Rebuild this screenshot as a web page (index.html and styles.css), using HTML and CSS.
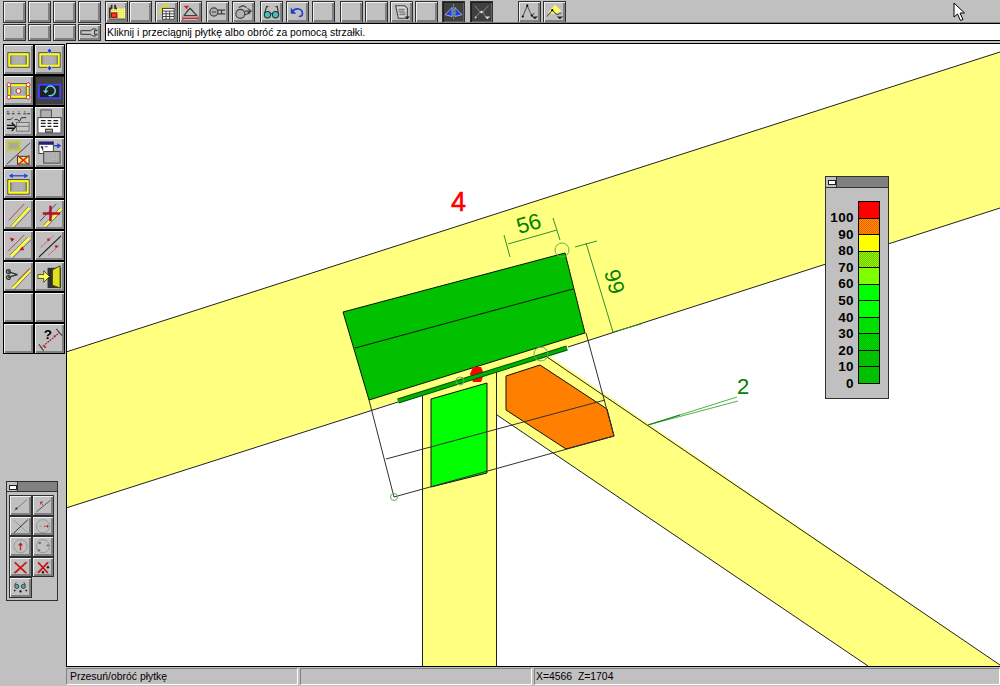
FILE: index.html
```html
<!DOCTYPE html>
<html lang="pl">
<head>
<meta charset="utf-8">
<title>Płytka</title>
<link rel="stylesheet" href="styles.css">
</head>
<body>
<svg class="defs" width="0" height="0">
  <defs>
    <pattern id="dy" width="2" height="2" patternUnits="userSpaceOnUse"><rect width="2" height="2" fill="#ffff80"/><rect width="1" height="1" fill="#c8c840"/></pattern>
    <pattern id="dg" width="2" height="2" patternUnits="userSpaceOnUse"><rect width="2" height="2" fill="#c0c0c0"/><rect width="1" height="1" fill="#808080"/></pattern>
    <symbol id="frame" viewBox="0 0 28 28"><rect x="3" y="7" width="22" height="15" fill="#a8a8a8" stroke="#404040"/><rect x="4.500" y="8.500" width="19" height="12" fill="none" stroke="#ffff00" stroke-width="2"/><rect x="9" y="10" width="10" height="9" fill="url(#dg)"/><path d="M6 10v9M22 10v9" stroke="#606060"/></symbol>
  </defs>
</svg>

<header class="toolbar">
  <div class="row row-top">
    <div class="group g-a"><span class="btn"></span><span class="btn"></span><span class="btn"></span><span class="btn"></span></div>
    <div class="group g-b">
      <span class="btn"><svg class="ico" viewBox="0 0 21 20"><rect x="3" y="6" width="17" height="11" fill="url(#dy)"/><path d="M3 17V6h2V2M9 2v4h2" fill="none" stroke="#303030" stroke-width="2"/><rect x="5" y="11" width="6" height="5" fill="#ff3030" stroke="#800000"/><path d="M2 18h18" stroke="#303030"/></svg></span>
      <span class="btn"></span>
    </div>
    <div class="group g-b">
      <span class="btn"><svg class="ico" viewBox="0 0 21 20"><path d="M2 8L8 1h6L2 13z" fill="#d8d840"/><rect x="6" y="6" width="13" height="12" fill="#fff" stroke="#303030"/><path d="M6 9h13M10 9v9M14 9v9M6 12h13M6 15h13" stroke="#303030"/></svg></span>
      <span class="btn"><svg class="ico" viewBox="0 0 21 20"><path d="M3 14c2-1 3-5 7-8 4 3 5 7 8 8z" fill="#c0c0c0" stroke="#404040" stroke-width="1.500"/><path d="M2 17h17" stroke="#e02020" stroke-width="1.500"/><path d="M3 3h6l-3 4z" fill="#e02020"/><path d="M2 15v4M19 15v4" stroke="#e02020"/></svg></span>
    </div>
    <div class="group g-d">
      <span class="btn"><svg class="ico" viewBox="0 0 21 20"><circle cx="6.500" cy="10" r="4.500" fill="#b0b0b0" stroke="#404040" stroke-width="1.300"/><path d="M4 10h5M11 8h8M11 12h8M15 8v4" stroke="#404040" stroke-width="1.300" fill="none"/></svg></span>
      <span class="btn"><svg class="ico" viewBox="0 0 21 20"><circle cx="7" cy="12" r="5" fill="#b0b0b0" stroke="#404040" stroke-width="1.300"/><path d="M5 5l5-2 4 2M12 9h7M12 13l6-2M15 6l4 3-4 2" stroke="#404040" stroke-width="1.300" fill="none"/></svg></span>
    </div>
    <div class="group g-e">
      <span class="btn"><svg class="ico" viewBox="0 0 21 20"><circle cx="6" cy="13" r="3.500" fill="#40c0c0" stroke="#303030" stroke-width="1.200"/><circle cx="15" cy="13" r="3.500" fill="#40c0c0" stroke="#303030" stroke-width="1.200"/><path d="M9 12h3M3 11l2-7h2M18 11l-1-7h-2" fill="none" stroke="#303030" stroke-width="1.200"/></svg></span>
      <span class="btn"><svg class="ico" viewBox="0 0 21 20"><path d="M5 9c4-4 11-3 11 3 0 2-2 3-4 3" fill="none" stroke="#2040c0" stroke-width="1.800"/><path d="M3 5v7h6z" fill="#2040c0"/></svg></span>
      <span class="btn"></span>
    </div>
    <div class="group g-f">
      <span class="btn"></span><span class="btn"></span>
      <span class="btn"><svg class="ico" viewBox="0 0 21 20"><path d="M4 3h10l3 3v11H7z" fill="#d8d8d8" stroke="#404040" stroke-width="1.200"/><path d="M7 7h7M7 9h7M8 11h7M8 13h7" stroke="#606060"/><path d="M14 15h6l-3 3z" fill="#202020"/></svg></span>
      <span class="btn"></span>
    </div>
    <div class="group g-g">
      <span class="btn on"><svg class="ico" viewBox="0 0 21 20"><path d="M9 5v10L1 13z" fill="#2040e0" stroke="#fff" stroke-width=".6"/><path d="M12 5v10l8-2z" fill="#2040e0" stroke="#fff" stroke-width=".6"/><path d="M10.500 1v18" stroke="#40c0b0" stroke-dasharray="2 1"/></svg></span>
      <span class="btn on"><svg class="ico" viewBox="0 0 21 20"><path d="M3 3l6 7-6 7M18 3l-6 7 3 5" fill="none" stroke="#909090"/><circle cx="10.500" cy="10" r="1.500" fill="#e0e0e0"/><circle cx="4" cy="16" r="1" fill="#e0e0e0"/><path d="M14 15h6l-3 3z" fill="#e0e0e0"/></svg></span>
    </div>
    <div class="group g-h">
      <span class="btn"><svg class="ico" viewBox="0 0 21 20"><path d="M3 15L8 3l5 11 3-3" fill="none" stroke="#606060" stroke-width="1.200"/><circle cx="3" cy="15" r="1.200"/><circle cx="8" cy="3" r="1.200"/><circle cx="13" cy="14" r="1.200"/><path d="M13 15h7l-3.500 3z" fill="#202020"/></svg></span>
      <span class="btn"><svg class="ico" viewBox="0 0 21 20"><path d="M3 11L11 2l7 7-6 3z" fill="#ffff60"/><path d="M2 15l6-7 5 5 5-2" fill="none" stroke="#505050" stroke-width="1.200"/><circle cx="8" cy="8" r="1.200"/><path d="M13 15h7l-3.500 3z" fill="#202020"/></svg></span>
    </div>
  </div>
  <div class="row row-bottom">
    <div class="group g-a short">
      <span class="btn"></span><span class="btn"></span><span class="btn"></span>
      <span class="btn"><svg class="ico" viewBox="0 0 21 14"><path d="M1 5h11a4 4 0 0 1 7 0h-3v4h3a4 4 0 0 1-7 0H1z" fill="#c8c8c8" stroke="#303030" stroke-width="1.100"/></svg></span>
    </div>
    <p class="hint">Kliknij i przeciągnij płytkę albo obróć za pomocą strzałki.</p>
  </div>
</header>

<main class="main">
  <nav class="side">
    <span class="tool"><svg class="ico" viewBox="0 0 28 28"><use href="#frame"/></svg></span>
    <span class="tool"><svg class="ico" viewBox="0 0 28 28"><use href="#frame"/><path d="M14 2l2.500 3L14 8l-2.500-3zM14 20l2.500 3-2.500 3-2.500-3z" fill="#2040e0" stroke="#fff" stroke-width=".5"/></svg></span>
    <span class="tool"><svg class="ico" viewBox="0 0 28 28"><use href="#frame"/><g fill="#fff" stroke="#d02020"><circle cx="4" cy="8" r="2"/><circle cx="24" cy="8" r="2"/><circle cx="4" cy="21" r="2"/><circle cx="24" cy="21" r="2"/><circle cx="14" cy="14.500" r="2.500"/></g></svg></span>
    <span class="tool on"><svg class="ico" viewBox="0 0 28 28"><rect x="3" y="8" width="22" height="14" fill="#202020" stroke="#4040ff" stroke-width="2"/><path d="M10 15a5 5 0 1 1 3 4" fill="none" stroke="#60d8d8" stroke-width="1.500"/><path d="M7 14h6l-3 3z" fill="#60d8d8"/></svg></span>
    <span class="tool"><svg class="ico" viewBox="0 0 28 28"><path d="M2 6h3M7 6h3M13 6h3M19 6h3M23 6h3M2 12h4l2-2M10 12h3l2 2 2-4h5M2 4h2M8 4h1M14 4h1M20 4h1" stroke="#303030" fill="none"/><rect x="12" y="15" width="13" height="9" fill="#c8c8c8" stroke="#707070"/><path d="M12 19h13" stroke="#707070"/><path d="M2 18h7M2 21h7M7 15l4 4.500L7 24" fill="none" stroke="#101010" stroke-width="1.300"/></svg></span>
    <span class="tool"><svg class="ico" viewBox="0 0 28 28"><rect x="5" y="2" width="11" height="9" fill="#b0b0b0" stroke="#505050"/><rect x="2" y="10" width="24" height="16" fill="#fff" stroke="#303030"/><path d="M5 13h5M12 13h4M18 13h5M5 16h5M12 16h4M18 16h5M5 19h5M12 19h4M18 19h5" stroke="#202020" stroke-width="1.300"/><rect x="10" y="22" width="7" height="3" fill="#c0c0c0" stroke="#202020"/></svg></span>
    <span class="tool"><svg class="ico" viewBox="0 0 28 28"><path d="M2 26L26 4" stroke="#404040"/><rect x="3" y="3" width="12" height="8" fill="#a8a8a8" stroke="#c8c820" stroke-width="2"/><rect x="13" y="18" width="12" height="8" fill="url(#dy)" stroke="#303030"/><path d="M13 17l12 10M25 17L13 27" stroke="#e02020" stroke-width="1.500"/></svg></span>
    <span class="tool"><svg class="ico" viewBox="0 0 28 28"><rect x="3" y="3" width="15" height="12" fill="#fff" stroke="#404040"/><rect x="3" y="3" width="15" height="3" fill="#202080"/><path d="M5 8h2v4M9 8h3" stroke="#404040"/><path d="M19 7h5M22 5l3 2-3 2" fill="none" stroke="#2040c0" stroke-width="1.300"/><rect x="8" y="13" width="17" height="12" fill="#b0b0b0" stroke="#404040"/><rect x="16" y="15" width="7" height="8" fill="url(#dg)"/></svg></span>
    <span class="tool"><svg class="ico" viewBox="0 0 28 28"><use href="#frame" y="3"/><path d="M6 6h16" stroke="#2040e0" stroke-width="1.300"/><path d="M4 6l4-2.500v5zM24 6l-4-2.500v5z" fill="#2040e0"/></svg></span>
    <span class="tool"></span>
    <span class="tool"><svg class="ico" viewBox="0 0 28 28"><path d="M4 20L20 3" stroke="#c04040"/><path d="M7 26L25 7" stroke="#ffff40" stroke-width="3"/><path d="M6 26L24 6M9 28L27 9" stroke="#505050" stroke-width=".7"/></svg></span>
    <span class="tool"><svg class="ico" viewBox="0 0 28 28"><path d="M4 21L21 3" stroke="#505050"/><path d="M9 26L26 8" stroke="#ffff40" stroke-width="3"/><path d="M8 25L25 7M10 28L27 10" stroke="#505050" stroke-width=".7"/><path d="M7 13h18M15 5v16" stroke="#b01030" stroke-width="2.500"/></svg></span>
    <span class="tool"><svg class="ico" viewBox="0 0 28 28"><path d="M3 20L20 3" stroke="#c04040"/><path d="M6 25L25 6" stroke="#ffff40" stroke-width="3"/><path d="M5 24L24 5M8 27L27 8" stroke="#505050" stroke-width=".7"/><path d="M5 6l5 1-3 3z" fill="#c01010"/><path d="M18 15l2 4h-5z" fill="#c01010"/></svg></span>
    <span class="tool"><svg class="ico" viewBox="0 0 28 28"><path d="M3 26L26 4" stroke="#202020" stroke-width="1.200"/><path d="M5 16L18 4M13 24L25 13" stroke="#c05050" stroke-dasharray="3 1"/><circle cx="13" cy="8" r="1.500" fill="#c03030"/><circle cx="21" cy="15" r="1.500" fill="#c03030"/></svg></span>
    <span class="tool"><svg class="ico" viewBox="0 0 28 28"><path d="M8 26L26 8" stroke="#ffff40" stroke-width="3"/><path d="M7 25L25 7M9 28L27 9" stroke="#505050" stroke-width=".7"/><path d="M13 18L26 5" stroke="#c05050"/><path d="M3 9l10 3M3 15l10-3" stroke="#303030" stroke-width="1.300"/><circle cx="3.500" cy="9" r="2" fill="none" stroke="#303030" stroke-width="1.300"/><circle cx="3.500" cy="15" r="2" fill="none" stroke="#303030" stroke-width="1.300"/></svg></span>
    <span class="tool"><svg class="ico" viewBox="0 0 28 28"><rect x="12" y="5" width="14" height="21" fill="#303030"/><path d="M17 7l8-4v23l-8-3z" fill="#e0e020" stroke="#404010"/><path d="M2 12h6V8l6 6-6 6v-4H2z" fill="#ffff60" stroke="#505010"/></svg></span>
    <span class="tool"></span>
    <span class="tool"></span>
    <span class="tool"></span>
    <span class="tool"><svg class="ico" viewBox="0 0 28 28"><path d="M5 24L24 8" stroke="#c01010" stroke-dasharray="2 1" stroke-width="1.200"/><path d="M3 20l5 7M21 4l6 7" stroke="#404040" stroke-width="1.200"/><path d="M8 21l1 3 2-1zM21 11l-3 0 1 2z" fill="#c01010"/><text class="qmark" x="8" y="14">?</text></svg></span>
  </nav>

  <section class="canvas">
    <svg class="drawing" viewBox="67 44 933 622" width="933" height="622">
      <path d="M66 352L1000 52V208L66 508z" fill="#ffff80"/>
      <path d="M422 396L497 370V666H422z" fill="#ffff80"/>
      <path d="M497 370L547 354L1000 665V666H868L497 415z" fill="#ffff80"/>
      <g fill="none" stroke="#202020">
        <path d="M66 352L1000 52"/>
        <path d="M66 508L398 402M568 347L1000 208"/>
        <path d="M422.500 396V666M496.500 372V666"/>
        <path d="M547 357L1000 665M497 415L868 666"/>
      </g>
      <path d="M343 312L565 253L585 333L369 400z" fill="#00c000" stroke="#101010"/>
      <path d="M355 348L573 289" stroke="#101010" fill="none"/>
      <path d="M431 399L487 383V473L431 487z" fill="#00ff00" stroke="#101010"/>
      <path d="M506 376L540 365L607 409L614 436L566 449L506 410z" fill="#ff8000" stroke="#101010"/>
      <g fill="none" stroke="#303030">
        <path d="M369 400L394 497L614 436L586 333"/>
        <path d="M386 459L605 400"/>
      </g>
      <path d="M473 367L481 367L484 374L481 382L473 382L470 374z" fill="#ff0000"/>
      <path d="M398 401L567 348" stroke="#005000" stroke-width="5" fill="none"/>
      <path d="M398 401L567 348" stroke="#00b000" stroke-width="3" fill="none"/>
      <g fill="none" stroke="#60b060">
        <circle cx="562" cy="250" r="7"/>
        <circle cx="541" cy="354" r="7"/>
        <circle cx="460" cy="381" r="4"/>
        <circle cx="394" cy="497" r="3.500"/>
      </g>
      <g fill="none" stroke="#309030">
        <path d="M508 244L557 230M504 235L510 257M553 218L560 240"/>
        <path d="M586 243L613 332L641 324M575 247L597 241"/>
      </g>
      <g fill="none" stroke="#50b050">
        <path d="M648 425L737 397M648 425L738 401"/>
      </g>
      <path d="M648 425L680 415" stroke="#108010"/>
      <text class="num" transform="translate(519 234) rotate(-16)">56</text>
      <text class="num" transform="translate(604 272) rotate(74)">99</text>
      <text class="num" x="737" y="394">2</text>
      <text class="mark" x="451" y="211">4</text>
    </svg>
  </section>
</main>

<footer class="status">
  <span class="field f-a">Przesuń/obróć płytkę</span>
  <span class="field f-b"></span>
  <span class="field f-c">X=4566&nbsp; Z=1704</span>
</footer>

<aside class="palette">
  <div class="titlebar"><i class="sys"></i></div>
  <div class="pal-grid">
    <span class="pbtn"><svg class="ico" viewBox="0 0 22 20"><path d="M3 17L19 3" stroke="#707070"/><circle cx="6" cy="14" r="1.300" fill="#202020"/></svg></span>
    <span class="pbtn"><svg class="ico" viewBox="0 0 22 20"><path d="M3 18L20 4" stroke="#404040"/><path d="M8 6l3 4M8 6l3 0M8 6v3" stroke="#d02020" fill="none"/></svg></span>
    <span class="pbtn"><svg class="ico" viewBox="0 0 22 20"><path d="M3 3l16 14" stroke="#909090"/><path d="M3 18L20 2" stroke="#303030" stroke-width="1.200"/></svg></span>
    <span class="pbtn"><svg class="ico" viewBox="0 0 22 20"><circle cx="11" cy="10" r="8" fill="none" stroke="#909090"/><path d="M7 10h1M9 10h0M12 10h5" stroke="#c02020"/><path d="M16 8l2 2-2 2z" fill="#c02020"/></svg></span>
    <span class="pbtn"><svg class="ico" viewBox="0 0 22 20"><circle cx="11" cy="10" r="8" fill="none" stroke="#909090"/><path d="M11 15V7" stroke="#c02020" stroke-width="1.500"/><path d="M8 9l3-4 3 4z" fill="#c02020"/></svg></span>
    <span class="pbtn"><svg class="ico" viewBox="0 0 22 20"><circle cx="11" cy="10" r="8" fill="none" stroke="#909090"/><path d="M6 5l2 2M8 5l-2 2M16 8l2 2M18 8l-2 2M5 14l2 2M7 14l-2 2" stroke="#303030"/></svg></span>
    <span class="pbtn"><svg class="ico" viewBox="0 0 22 20"><path d="M2 17L20 3" stroke="#909090"/><path d="M4 4l14 13M18 4L4 17" stroke="#d01010" stroke-width="2"/></svg></span>
    <span class="pbtn"><svg class="ico" viewBox="0 0 22 20"><path d="M2 17L20 3" stroke="#909090"/><path d="M5 4l12 13M17 4L5 17" stroke="#d01010" stroke-width="2"/><circle cx="11" cy="16" r="1.500" fill="#202020"/><circle cx="17" cy="10" r="1.500" fill="#202020"/></svg></span>
    <span class="pbtn"><svg class="ico" viewBox="0 0 22 20"><circle cx="6.500" cy="9" r="2.500" fill="#40b0b0" stroke="#303030"/><circle cx="14.500" cy="9" r="2.500" fill="#40b0b0" stroke="#303030"/><path d="M4 7l2-3M17 7l-2-3" stroke="#303030"/><circle cx="11" cy="15" r="1.300"/><circle cx="18" cy="14" r="1"/><circle cx="4" cy="14" r="1"/></svg></span>
  </div>
</aside>

<aside class="legend">
  <div class="titlebar"><i class="sys"></i></div>
  <div class="legend-body">
    <ul class="scale-labels">
      <li>100</li><li>90</li><li>80</li><li>70</li><li>60</li><li>50</li><li>40</li><li>30</li><li>20</li><li>10</li><li>0</li>
    </ul>
    <ul class="scale-bar">
      <li class="c100"></li><li class="c90"></li><li class="c80"></li><li class="c70"></li><li class="c60"></li><li class="c50"></li><li class="c40"></li><li class="c30"></li><li class="c20"></li><li class="c10"></li><li class="c0"></li>
    </ul>
  </div>
</aside>

<svg class="cursor" viewBox="0 0 14 20" width="14" height="20"><path d="M1 1V15L4.500 12L7.500 18.500L10 17.500L7 11H11.500z" fill="#fff" stroke="#000"/></svg>
</body>
</html>
```
FILE: styles.css
```css
* { box-sizing: border-box; }
html, body { margin: 0; padding: 0; }
body {
  position: relative;
  width: 1000px;
  height: 686px;
  overflow: hidden;
  background: #c0c0c0;
  font-family: "Liberation Sans", Arial, sans-serif;
  font-size: 10.4px;
  color: #000;
}
.defs { position: absolute; }
ul { list-style: none; margin: 0; padding: 0; }

.toolbar { display: flex; flex-direction: column; height: 43px; }
.row { display: flex; }
.row-top { height: 23px; padding: 1px 0 0 3px; }
.row-bottom { height: 20px; padding-left: 3px; }
.group { display: flex; height: 22px; }
.short { height: 17px; margin-top: 1px; }
.g-a { gap: 2px; }
.g-b { gap: 1px; margin-left: 4px; }
.g-d { gap: 3px; margin-left: 3px; }
.g-e { gap: 3px; margin-left: 5px; }
.g-f { gap: 2px; margin-left: 5px; }
.g-g { gap: 5px; margin-left: 4px; }
.g-h { gap: 2px; margin-left: 25px; }
.g-b + .g-b { margin-left: 3px; }
.g-b + .g-d { margin-left: 4px; }

.btn, .tool, .pbtn {
  display: flex;
  background: #c0c0c0;
  border: 1px solid #303030;
  box-shadow: inset 1px 1px 0 #f0f0f0, inset -2px -2px 0 #808080;
}
.btn { width: 23px; height: 100%; padding: 1px; }
.btn.on, .tool.on { background: #404040; box-shadow: inset 1px 1px 0 #202020, inset -1px -1px 0 #606060; }
.ico { width: 100%; height: 100%; display: block; overflow: hidden; }

.hint {
  flex: 1;
  margin: 0 0 0 4px;
  height: 18px;
  background: #fff;
  border: 1px solid #000;
  border-right: 0;
  box-shadow: 0 -1px 0 #808080;
  padding: 2px 0 0 1px;
  line-height: 13px;
  white-space: nowrap;
}

.main { display: flex; height: 624px; }
.side {
  flex: none;
  width: 66px;
  padding: 1px 0 0 3px;
  display: grid;
  grid-template-columns: 31px 31px;
  grid-auto-rows: 31px;
  align-content: start;
}
.tool { padding: 1px; border-color: #000; }
.canvas {
  flex: none;
  width: 934px;
  height: 624px;
  background: #fff;
  border: 1px solid #000;
  border-right: 0;
  overflow: hidden;
}
.drawing { display: block; }
.num { font-family: "Liberation Sans", Arial, sans-serif; font-size: 22px; fill: #008000; }
.mark { font-family: "Liberation Sans", Arial, sans-serif; font-size: 27px; fill: #ff0000; stroke: #ff0000; stroke-width: .6px; }
.qmark { font-family: "Liberation Sans", Arial, sans-serif; font-size: 14px; font-weight: bold; fill: #000; }

.status { display: flex; height: 19px; padding: 1px 0 0 66px; gap: 2px; }
.field {
  height: 17px;
  padding: 1px 0 0 3px;
  line-height: 14px;
  border-top: 1px solid #808080;
  border-left: 1px solid #808080;
  border-right: 1px solid #fff;
  border-bottom: 1px solid #fff;
  white-space: nowrap;
}
.f-a, .f-b { width: 232px; }
.f-c { flex: 1; padding-left: 1px; }

.palette, .legend {
  position: absolute;
  background: #c0c0c0;
  border: 1px solid #303030;
}
.palette { left: 6px; top: 481px; width: 52px; height: 120px; }
.titlebar { height: 10px; background: #808080; border-bottom: 1px solid #303030; display: flex; }
.sys { display: block; width: 11px; height: 100%; background: #c0c0c0; border-right: 1px solid #303030; position: relative; }
.sys::after { content: ""; position: absolute; left: 2px; top: 3px; width: 6px; height: 3px; background: #fff; border: 1px solid #202020; }
.pal-grid {
  display: grid;
  grid-template-columns: 23px 22px;
  grid-auto-rows: 20.500px;
  padding: 3px 0 0 2px;
}
.pbtn { padding: 1px; }

.legend { left: 825px; top: 176px; width: 64px; height: 223px; }
.legend .titlebar { height: 11px; }
.legend-body { display: flex; }
.scale-labels {
  width: 28px;
  padding-top: 22px;
  font-weight: bold;
  font-size: 13.500px;
  letter-spacing: .4px;
  text-align: right;
}
.scale-labels li { height: 16.600px; line-height: 16.600px; }
.scale-bar {
  width: 22px;
  height: 183px;
  margin: 13px 0 0 4px;
  border: 1px solid #000;
  display: flex;
  flex-direction: column;
}
.scale-bar li { flex: 1; border-bottom: 1px solid #000; }
.scale-bar li:last-child { border-bottom: 0; }
.c100 { background: #ff0000; }
.c90 { background: repeating-conic-gradient(#ff9000 0 25%, #f06000 0 50%) 0 0 / 2px 2px; }
.c80 { background: #ffff00; }
.c70 { background: repeating-conic-gradient(#a0f000 0 25%, #60d000 0 50%) 0 0 / 2px 2px; }
.c60 { background: #80ff00; }
.c50, .c40 { background: #00ff00; }
.c30 { background: #00e000; }
.c20 { background: repeating-conic-gradient(#00e000 0 25%, #00b800 0 50%) 0 0 / 2px 2px; }
.c10, .c0 { background: #00c000; }

.cursor { position: absolute; left: 953px; top: 2px; }
```
